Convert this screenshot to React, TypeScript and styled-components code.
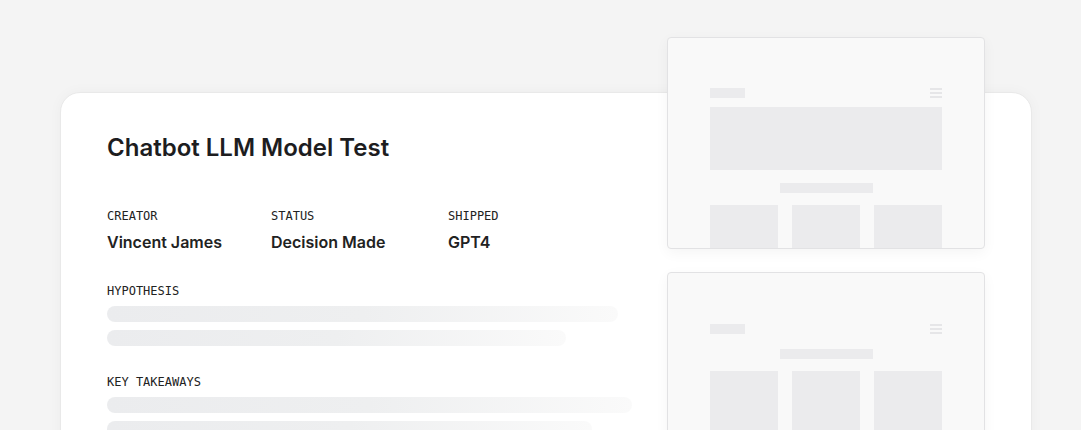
import styled, { createGlobalStyle } from "styled-components"

const GlobalStyle = createGlobalStyle`
  html, body {
    margin: 0;
    padding: 0;
    background: #f4f4f4;
  }
  body {
    font-family: Inter, "Noto Sans", sans-serif;
    -webkit-font-smoothing: antialiased;
  }
`

const meta = [
    { label: "Creator", value: "Vincent James", width: 164 },
    { label: "Status", value: "Decision Made", width: 177 },
    { label: "Shipped", value: "GPT4", width: 120 },
]

const sections = [
    { title: "Hypothesis", gap: 32, bars: [511, 459] },
    { title: "Key Takeaways", gap: 29, bars: [525, 485] },
]

export default function App() {
    return (
        <>
            <GlobalStyle />
            <Stage>
                <Card>
                    <Title>Chatbot LLM Model Test</Title>
                    <MetaRow>
                        {meta.map((m) => (
                            <MetaItem key={m.label} $width={m.width}>
                                <Label>{m.label}</Label>
                                <Value>{m.value}</Value>
                            </MetaItem>
                        ))}
                    </MetaRow>
                    {sections.map((s) => (
                        <Section key={s.title} $gap={s.gap}>
                            <Label>{s.title}</Label>
                            <Bars>
                                {s.bars.map((w, i) => (
                                    <Bar key={i} $width={w} />
                                ))}
                            </Bars>
                        </Section>
                    ))}
                </Card>

                <Previews>
                    <Preview $height={212} $top={50}>
                        <PreviewNav>
                            <Logo />
                            <Burger>
                                <span />
                                <span />
                                <span />
                            </Burger>
                        </PreviewNav>
                        <Hero />
                        <Heading $gap={13} />
                        <Tiles>
                            <Tile />
                            <Tile />
                            <Tile />
                        </Tiles>
                    </Preview>
                    <Preview $height={200} $top={51}>
                        <PreviewNav>
                            <Logo />
                            <Burger>
                                <span />
                                <span />
                                <span />
                            </Burger>
                        </PreviewNav>
                        <Heading $gap={15} />
                        <Tiles>
                            <Tile />
                            <Tile />
                            <Tile />
                        </Tiles>
                    </Preview>
                </Previews>
            </Stage>
        </>
    )
}

const Stage = styled.div`
    position: relative;
    width: 1081px;
    height: 430px;
    overflow: hidden;
    box-sizing: border-box;
    padding: 92px 49px 0 60px;
`

const Card = styled.div`
    height: 420px;
    box-sizing: border-box;
    background: #ffffff;
    border: 1px solid #e9e9e9;
    border-radius: 20px;
    box-shadow: 0 0 14px rgba(0, 0, 0, 0.035);
    padding: 40px 46px 0;
`

const Title = styled.h1`
    margin: 0;
    font-size: 24px;
    line-height: 30px;
    font-weight: 600;
    color: #1d1d1f;
    letter-spacing: 0;
`

const MetaRow = styled.div`
    display: flex;
    margin-top: 46px;
`

const MetaItem = styled.div<{ $width: number }>`
    width: ${(p) => p.$width}px;
    display: flex;
    flex-direction: column;
    gap: 8px;
`

const Label = styled.div`
    font-family: "DejaVu Sans Mono", "Liberation Mono", monospace;
    font-size: 12px;
    line-height: 15px;
    text-transform: uppercase;
    color: #222222;
`

const Value = styled.div`
    font-size: 16px;
    line-height: 20px;
    font-weight: 600;
    color: #222222;
`

const Section = styled.div<{ $gap: number }>`
    margin-top: ${(p) => p.$gap}px;
    display: flex;
    flex-direction: column;
    gap: 7px;
`

const Bars = styled.div`
    display: flex;
    flex-direction: column;
    gap: 8px;
`

const Bar = styled.div<{ $width: number }>`
    width: ${(p) => p.$width}px;
    height: 16px;
    border-radius: 8px;
    background: linear-gradient(90deg, #ebecee 0%, #eeeff0 50%, #fafafa 100%);
`

const Previews = styled.div`
    position: absolute;
    left: 667px;
    top: 37px;
    width: 318px;
    display: flex;
    flex-direction: column;
    gap: 23px;
`

const Preview = styled.div<{ $height: number; $top: number }>`
    height: ${(p) => p.$height}px;
    box-sizing: border-box;
    overflow: hidden;
    background: #f9f9f9;
    border: 1px solid #e2e2e4;
    border-radius: 4px;
    box-shadow: 0 4px 14px rgba(0, 0, 0, 0.045);
    padding: ${(p) => p.$top}px 42px 0;
`

const PreviewNav = styled.div`
    display: flex;
    justify-content: space-between;
    align-items: flex-start;
    height: 10px;
`

const Logo = styled.div`
    width: 35px;
    height: 10px;
    background: #ebebed;
`

const Burger = styled.div`
    width: 12px;
    display: flex;
    flex-direction: column;
    gap: 2px;
    span {
        display: block;
        height: 2px;
        background: #e6e6e8;
    }
`

const Hero = styled.div`
    margin-top: 9px;
    height: 63px;
    background: #ebebed;
`

const Heading = styled.div<{ $gap: number }>`
    margin: ${(p) => p.$gap}px auto 0;
    width: 93px;
    height: 10px;
    background: #ebebed;
`

const Tiles = styled.div`
    margin-top: 12px;
    display: grid;
    grid-template-columns: repeat(3, 1fr);
    gap: 14px;
`

const Tile = styled.div`
    height: 80px;
    background: #ebebed;
`
